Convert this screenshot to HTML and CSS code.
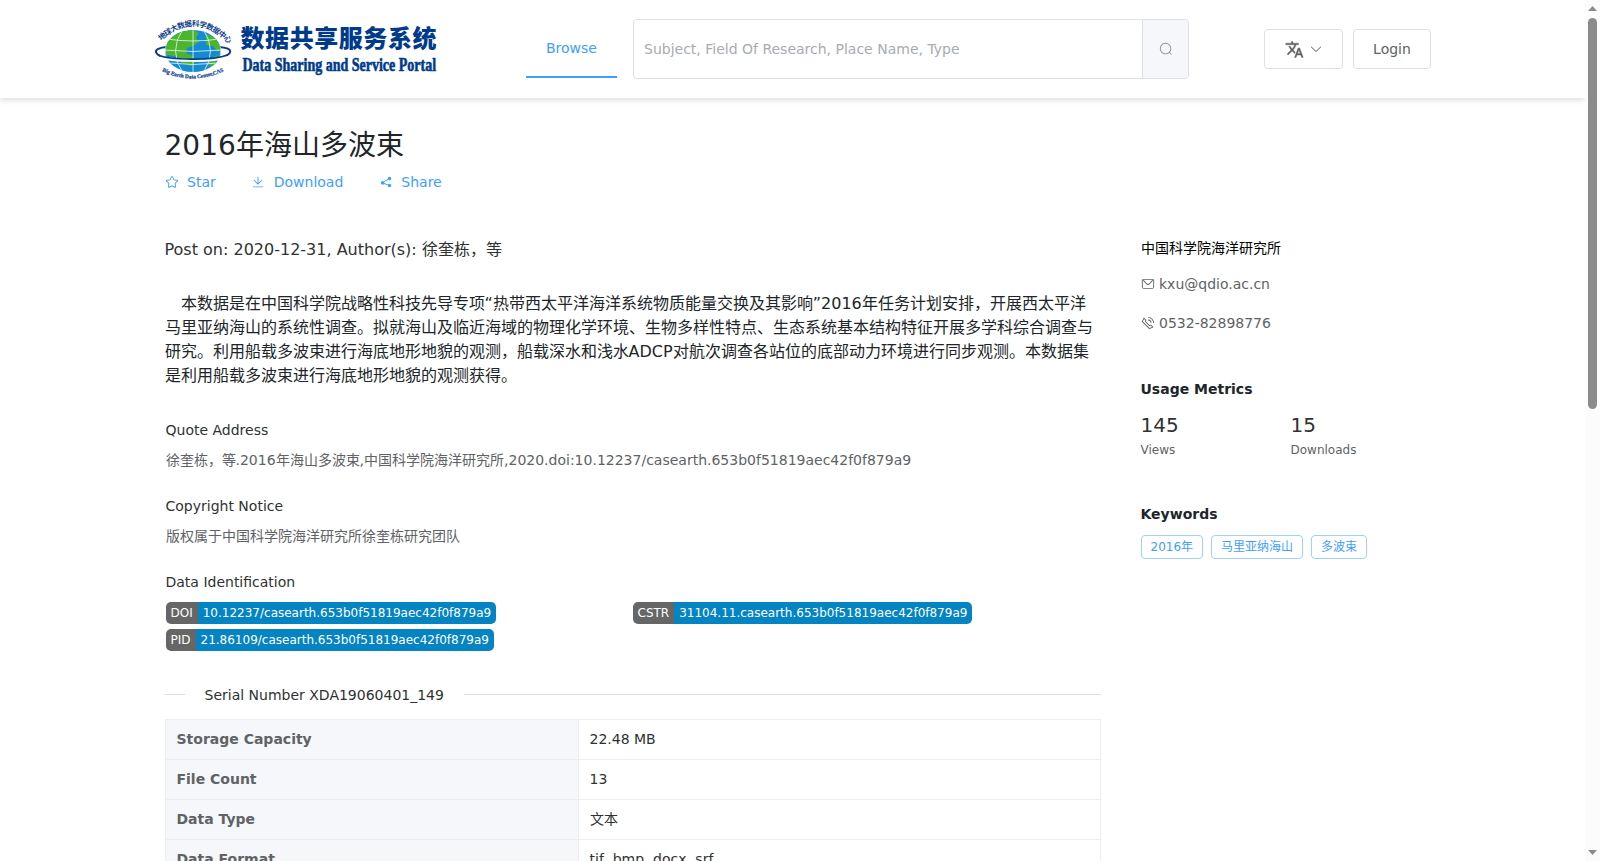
FILE: index.html
```
<!DOCTYPE html>
<html lang="zh-CN">
<head>
    <meta charset="UTF-8">
    <title>2016年海山多波束</title>
    <link rel="stylesheet" href="styles.css">
</head>
<body>
    <div class="page">
        <header class="header">
            <svg class="logo" width="290" height="70" viewBox="150 14 290 70">
                <defs>
                    <clipPath id="globe"><ellipse cx="193" cy="51" rx="28" ry="21"/></clipPath>
                    <path id="arcTop" d="M161 41 Q193 11 227 42"/>
                    <path id="arcBottom" d="M162 71 Q192 86 224 71"/>
                </defs>
                <path d="M167 47 C151 48 152 56 172 59 C187 62 207 61 219 58 C234 54 234 48 219 47" fill="none" stroke="#0b3c8c" stroke-width="2"/>
                <ellipse cx="193" cy="51" rx="28" ry="21" fill="#128bd2"/>
                <g clip-path="url(#globe)">
                    <path d="M164 54 L168 38 L178 32 L193 30 L199 33 L196 38 L199 42 L193 46 L187 48 L186 53 L193 56 L196 61 L191 66 L182 63 L178 57 Z" fill="#4cb52c"/>
                    <path d="M206 34 L216 38 L222 48 L218 52 L213 46 L206 45 Z M211 58 L218 55 L214 66 L208 65 Z" fill="#4cb52c"/>
                    <path d="M193 29V73M167 39Q193 43 219 39M164 50Q193 53 222 50M169 63Q193 66 218 63M183 29Q168 51 183 73M203 29Q218 51 203 73M174 32Q156 51 175 70M212 32Q230 51 211 70" fill="none" stroke="#e9f6ff" stroke-width="0.8"/>
                </g>
                <path d="M160 57 C171 61 212 62 227 57" fill="none" stroke="#fff" stroke-width="3"/>
                <path d="M158 55 C169 60 212 61 228 55" fill="none" stroke="#0b3c8c" stroke-width="1.6"/>
                <text class="logo-arc"><textPath href="#arcTop" textLength="77">地球大数据科学数据中心</textPath></text>
                <text class="logo-arc-en"><textPath href="#arcBottom" textLength="64">Big Earth Data Center,CAS</textPath></text>
                <text class="logo-cn" x="240.500" y="46.500" textLength="196">数据共享服务系统</text>
                <text class="logo-en" transform="translate(242.500 70.500) scale(.82 1)" textLength="236" lengthAdjust="spacingAndGlyphs">Data Sharing and Service Portal</text>
            </svg>
            <nav class="nav"><a class="nav-item">Browse</a></nav>
            <div class="search">
                <div class="search-input">Subject, Field Of Research, Place Name, Type</div>
                <div class="search-btn">
                    <svg class="icon" viewBox="0 0 1024 1024"><path d="m795.904 750.72 124.992 124.928a32 32 0 0 1-45.248 45.248L750.656 795.904a416 416 0 1 1 45.248-45.248zM480 832a352 352 0 1 0 0-704 352 352 0 0 0 0 704z"/></svg>
                </div>
            </div>
            <div class="actions">
                <button class="btn btn-lang">
                    <svg class="icon-lang" viewBox="0 0 24 24"><path d="M12.87 15.07l-2.54-2.51.03-.03A17.52 17.52 0 0014.07 6H17V4h-7V2H8v2H1v2h11.17C11.5 7.92 10.44 9.75 9 11.35 8.07 10.32 7.3 9.19 6.69 8h-2c.73 1.63 1.73 3.17 2.98 4.56l-5.09 5.02L4 19l5-5 3.11 3.11.76-2.04zM18.5 10h-2L12 22h2l1.12-3h4.75L21 22h2l-4.5-12zm-2.62 7l1.62-4.33L19.12 17h-3.24z"/></svg>
                    <svg class="icon" viewBox="0 0 1024 1024"><path d="M831.872 340.864 512 652.672 192.128 340.864a30.592 30.592 0 0 0-42.752 0 29.12 29.12 0 0 0 0 41.6L489.664 714.24a32 32 0 0 0 44.672 0l340.288-331.712a29.12 29.12 0 0 0 0-41.728 30.592 30.592 0 0 0-42.752 0z"/></svg>
                </button>
                <button class="btn btn-login">Login</button>
            </div>
        </header>

        <div class="container">
            <main class="main">
                <h1 class="title">2016年海山多波束</h1>
                <div class="links">
                    <a class="link">
                        <svg class="icon" viewBox="0 0 1024 1024"><path d="m512 747.84 228.16 119.936a6.4 6.4 0 0 0 9.28-6.72l-43.52-254.08 184.512-179.904a6.4 6.4 0 0 0-3.52-10.88l-255.104-37.12L517.76 147.904a6.4 6.4 0 0 0-11.52 0L392.192 379.072l-255.104 37.12a6.4 6.4 0 0 0-3.52 10.88L318.08 606.976l-43.584 254.08a6.4 6.4 0 0 0 9.28 6.72L512 747.84zM313.6 924.48a70.4 70.4 0 0 1-102.144-74.24l37.888-220.928L88.96 472.96A70.4 70.4 0 0 1 128 352.896l221.76-32.256 99.2-200.96a70.4 70.4 0 0 1 126.208 0l99.2 200.96 221.824 32.256a70.4 70.4 0 0 1 39.04 120.064L774.72 629.376l37.888 220.928a70.4 70.4 0 0 1-102.144 74.24L512 820.096l-198.4 104.32z"/></svg>
                        Star
                    </a>
                    <a class="link">
                        <svg class="icon" viewBox="0 0 1024 1024"><path d="M160 832h704a32 32 0 1 1 0 64H160a32 32 0 1 1 0-64zm384-253.696 236.288-236.352 45.248 45.248L508.8 704 192 387.2l45.248-45.248L480 584.704V128h64v450.304z"/></svg>
                        Download
                    </a>
                    <a class="link">
                        <svg class="icon" viewBox="0 0 1024 1024"><path d="m679.872 348.8-301.76 188.608a127.808 127.808 0 0 1 5.12 52.16l279.936 104.96a128 128 0 1 1-22.464 59.904l-279.872-104.96a128 128 0 1 1-16.64-166.272l301.696-188.608a128 128 0 1 1 33.92 54.272z"/></svg>
                        Share
                    </a>
                </div>

                <p class="post">Post on: 2020-12-31, Author(s): 徐奎栋，等</p>
                <p class="desc">　本数据是在中国科学院战略性科技先导专项“热带西太平洋海洋系统物质能量交换及其影响”2016年任务计划安排，开展西太平洋马里亚纳海山的系统性调查。拟就海山及临近海域的物理化学环境、生物多样性特点、生态系统基本结构特征开展多学科综合调查与研究。利用船载多波束进行海底地形地貌的观测，船载深水和浅水ADCP对航次调查各站位的底部动力环境进行同步观测。本数据集是利用船载多波束进行海底地形地貌的观测获得。</p>

                <section class="block">
                    <h4>Quote Address</h4>
                    <p>徐奎栋，等.2016年海山多波束,中国科学院海洋研究所,2020.doi:10.12237/casearth.653b0f51819aec42f0f879a9</p>
                </section>
                <section class="block">
                    <h4>Copyright Notice</h4>
                    <p>版权属于中国科学院海洋研究所徐奎栋研究团队</p>
                </section>
                <section class="block">
                    <h4>Data Identification</h4>
                    <div class="badges">
                        <div class="badge"><span class="badge-key">DOI</span><span class="badge-val">10.12237/casearth.653b0f51819aec42f0f879a9</span></div>
                        <div class="badge"><span class="badge-key">CSTR</span><span class="badge-val">31104.11.casearth.653b0f51819aec42f0f879a9</span></div>
                        <div class="badge"><span class="badge-key">PID</span><span class="badge-val">21.86109/casearth.653b0f51819aec42f0f879a9</span></div>
                    </div>
                </section>

                <div class="divider"><span>Serial Number XDA19060401_149</span></div>

                <table class="info">
                    <tr><th>Storage Capacity</th><td>22.48 MB</td></tr>
                    <tr><th>File Count</th><td>13</td></tr>
                    <tr><th>Data Type</th><td>文本</td></tr>
                    <tr><th>Data Format</th><td>tif, bmp, docx, srf</td></tr>
                </table>
            </main>

            <aside class="side">
                <div class="org">中国科学院海洋研究所</div>
                <div class="contact">
                    <svg class="icon" viewBox="0 0 1024 1024"><path d="M128 224v512a64 64 0 0 0 64 64h640a64 64 0 0 0 64-64V224H128zm0-64h768a64 64 0 0 1 64 64v512a128 128 0 0 1-128 128H192A128 128 0 0 1 64 736V224a64 64 0 0 1 64-64z"/><path d="M904 224 656.512 506.88a192 192 0 0 1-289.024 0L120 224h784zm-698.944 0 210.56 240.704a128 128 0 0 0 192.704 0L818.944 224H205.056z"/></svg>
                    kxu@qdio.ac.cn
                </div>
                <div class="contact">
                    <svg class="icon" viewBox="0 0 1024 1024"><path d="M79.36 432.256 591.744 944.64a32 32 0 0 0 35.2 6.784l253.44-108.544a32 32 0 0 0 9.984-52.032l-153.856-153.92a32 32 0 0 0-36.928-6.016l-69.888 34.944L358.08 394.24l35.008-69.888a32 32 0 0 0-5.952-36.928L233.152 133.568a32 32 0 0 0-52.032 10.048L72.512 397.056a32 32 0 0 0 6.784 35.2zm60.48-29.952 81.536-190.08L325.568 316.48l-24.64 49.216-20.608 41.216 32.576 32.64 271.552 271.552 32.64 32.64 41.216-20.672 49.28-24.576 104.192 104.128-190.08 81.472L139.84 402.304zM512 320v-64a256 256 0 0 1 256 256h-64a192 192 0 0 0-192-192zm0-192V64a448 448 0 0 1 448 448h-64a384 384 0 0 0-384-384z"/></svg>
                    0532-82898776
                </div>

                <h3 class="metrics-title">Usage Metrics</h3>
                <div class="metrics">
                    <div><div class="num">145</div><div class="label">Views</div></div>
                    <div><div class="num">15</div><div class="label">Downloads</div></div>
                </div>

                <h3 class="keywords-title">Keywords</h3>
                <div class="tags">
                    <span class="tag">2016年</span>
                    <span class="tag">马里亚纳海山</span>
                    <span class="tag">多波束</span>
                </div>
            </aside>
        </div>
    </div>

    <div class="scrollbar">
        <svg width="15" height="18" viewBox="0 0 15 18"><path d="M3 11h9L7.500 6z"/></svg>
        <div class="thumb"></div>
        <svg width="15" height="18" viewBox="0 0 15 18"><path d="M3 7h9l-4.500 5z"/></svg>
    </div>
</body>
</html>
```
FILE: styles.css
```
* {
    box-sizing: border-box;
}

body {
    margin: 0;
    display: flex;
    height: 861px;
    overflow: hidden;
    background: #fff;
    color: #212529;
    font-family: "DejaVu Sans", sans-serif;
    font-size: 14px;
    line-height: 20px;
}

h1, h3, h4, p {
    margin: 0;
    font-weight: normal;
}

.page {
    flex: 1;
    min-width: 0;
    overflow: hidden;
}

.icon {
    width: 14px;
    height: 14px;
    fill: currentColor;
    flex: none;
}

/* Header */
.header {
    display: flex;
    align-items: center;
    height: 98px;
    padding-left: 150px;
    box-shadow: 0 2px 6px rgba(0, 0, 0, 0.14);
}

.logo {
    flex: none;
    overflow: visible;
}

.logo-cn {
    font: 900 24px "Noto Sans CJK SC", sans-serif;
    fill: #003b8b;
}

.logo-en {
    font: bold 18px "Liberation Serif", serif;
    fill: #003b8b;
    stroke: #003b8b;
    stroke-width: 0.6px;
}

.logo-arc {
    font: bold 7.5px "Noto Sans CJK SC", sans-serif;
    fill: #0b3c8c;
}

.logo-arc-en {
    font: bold 5.5px "Liberation Serif", serif;
    fill: #0b3c8c;
    stroke: #0b3c8c;
    stroke-width: 0.2px;
}

.nav {
    margin-left: 86px;
    height: 60px;
}

.nav-item {
    display: block;
    width: 91px;
    height: 59px;
    border-bottom: 2px solid #409eff;
    color: #409eff;
    line-height: 58px;
    text-align: center;
}

.search {
    display: flex;
    width: 556px;
    height: 60px;
    margin-left: 16px;
    border: 1px solid #dcdfe6;
    border-radius: 4px;
    overflow: hidden;
}

.search-input {
    flex: 1;
    padding-left: 10px;
    color: #a8abb2;
    line-height: 59px;
}

.search-btn {
    display: flex;
    align-items: center;
    justify-content: center;
    width: 46px;
    border-left: 1px solid #dcdfe6;
    background: #f5f7fa;
    color: #909399;
}

.actions {
    display: flex;
    gap: 10px;
    margin-left: 75px;
}

.btn {
    display: flex;
    align-items: center;
    justify-content: center;
    height: 40px;
    padding: 0;
    border: 1px solid #dcdfe6;
    border-radius: 4px;
    background: #fff;
    color: #606266;
    font: inherit;
}

.btn-lang {
    width: 79px;
    gap: 5px;
}

.btn-login {
    width: 78px;
}

.icon-lang {
    width: 19px;
    height: 19px;
    fill: #606266;
    stroke: #606266;
    stroke-width: 0.5px;
}

/* Content */
.container {
    display: flex;
    padding-left: 164.5px;
}

.main {
    width: 936px;
}

.title {
    margin-top: 31px;
    font-size: 28px;
    line-height: 34px;
}

.links {
    display: flex;
    gap: 35.5px;
    margin-top: 9px;
}

.link {
    display: flex;
    align-items: center;
    gap: 8.5px;
    color: #409eff;
}

.post {
    margin-top: 46px;
    color: #303133;
    font-size: 16px;
    line-height: 24px;
}

.desc {
    margin-top: 30px;
    margin-bottom: 32px;
    font-size: 16px;
    line-height: 24px;
}

.block {
    height: 76px;
    padding-left: 1px;
}

.block h4 {
    color: #303133;
    font-size: 14px;
}

.block p {
    margin-top: 10px;
    color: #606266;
}

.badges {
    display: grid;
    grid-template-columns: 467px 1fr;
    row-gap: 5px;
    margin-top: 10px;
}

.badge {
    display: flex;
    height: 22px;
    color: #fff;
    font-size: 12px;
    line-height: 22px;
}

.badge-key {
    padding: 0 5px;
    border-radius: 5px 0 0 5px;
    background: #666;
}

.badge-val {
    padding: 0 5px;
    border-radius: 0 5px 5px 0;
    background: #0484c3;
}

.divider {
    display: flex;
    align-items: center;
    gap: 20px;
    margin-top: 37px;
    color: #303133;
}

.divider::before,
.divider::after {
    content: "";
    width: 20px;
    height: 1px;
    margin-bottom: 2px;
    background: #dcdfe6;
}

.divider::after {
    flex: 1;
}

.info {
    width: 936px;
    margin-top: 14px;
    border-collapse: collapse;
    table-layout: fixed;
}

.info th,
.info td {
    height: 40px;
    padding: 0 11px 2px;
    border: 1px solid #ebeef5;
    color: #303133;
    text-align: left;
}

.info th {
    width: 413px;
    background: #f5f7fa;
    color: #606266;
}

/* Sidebar */
.side {
    margin-left: 40px;
    padding-top: 140px;
}

.org {
    color: #000;
}

.contact {
    display: flex;
    align-items: center;
    gap: 4.5px;
    margin-top: 16px;
    color: #606266;
}

.contact + .contact {
    margin-top: 19px;
}

.side h3 {
    font-size: 14px;
    font-weight: bold;
}

.metrics-title {
    margin-top: 46px;
}

.metrics {
    display: grid;
    grid-template-columns: 150px 150px;
    margin-top: 12px;
}

.num {
    color: #303133;
    font-size: 20px;
    line-height: 28px;
}

.label {
    margin-top: 1px;
    color: #606266;
    font-size: 12px;
    line-height: 20px;
}

.keywords-title {
    margin-top: 44px;
}

.tags {
    display: flex;
    gap: 8px;
    margin-top: 11px;
}

.tag {
    height: 24px;
    padding: 0 9px;
    border: 1px solid #a0cfff;
    border-radius: 4px;
    color: #409eff;
    font-size: 12px;
    line-height: 22px;
}

/* Scrollbar */
.scrollbar {
    display: flex;
    flex-direction: column;
    align-items: center;
    justify-content: space-between;
    width: 15px;
    background: #fcfcfc;
}

.scrollbar svg {
    fill: #8b8b8b;
}

.thumb {
    width: 9px;
    height: 391px;
    margin-bottom: auto;
    border-radius: 5px;
    background: #8b8b8b;
}
```
